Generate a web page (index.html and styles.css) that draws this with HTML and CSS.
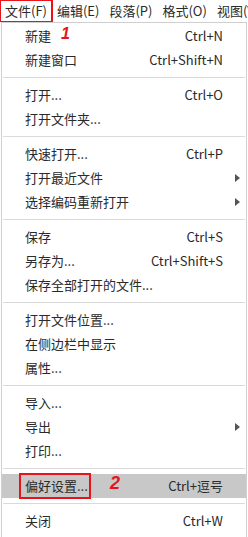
FILE: index.html
```html
<!DOCTYPE html>
<html lang="zh-CN">
<head>
<meta charset="utf-8">
<title>文件菜单</title>
<link rel="stylesheet" href="styles.css">
</head>
<body>
<div class="app">
  <div class="menubar">
    <span class="mb-item mb-active">文件(F)</span>
    <span class="mb-item">编辑(E)</span>
    <span class="mb-item">段落(P)</span>
    <span class="mb-item">格式(O)</span>
    <span class="mb-item">视图(V)</span>
  </div>
  <div class="menu">
    <div class="row"><span class="label">新建</span><span class="key">Ctrl+N</span><span class="sub"></span></div>
    <div class="row"><span class="label">新建窗口</span><span class="key">Ctrl+Shift+N</span><span class="sub"></span></div>
    <div class="sep"></div>
    <div class="row"><span class="label">打开...</span><span class="key">Ctrl+O</span><span class="sub"></span></div>
    <div class="row"><span class="label">打开文件夹...</span><span class="key"></span><span class="sub"></span></div>
    <div class="sep"></div>
    <div class="row"><span class="label">快速打开...</span><span class="key">Ctrl+P</span><span class="sub"></span></div>
    <div class="row"><span class="label">打开最近文件</span><span class="key"></span><span class="sub"><i class="arrow"></i></span></div>
    <div class="row"><span class="label">选择编码重新打开</span><span class="key"></span><span class="sub"><i class="arrow"></i></span></div>
    <div class="sep"></div>
    <div class="row"><span class="label">保存</span><span class="key">Ctrl+S</span><span class="sub"></span></div>
    <div class="row"><span class="label">另存为...</span><span class="key">Ctrl+Shift+S</span><span class="sub"></span></div>
    <div class="row"><span class="label">保存全部打开的文件...</span><span class="key"></span><span class="sub"></span></div>
    <div class="sep"></div>
    <div class="row"><span class="label">打开文件位置...</span><span class="key"></span><span class="sub"></span></div>
    <div class="row"><span class="label">在侧边栏中显示</span><span class="key"></span><span class="sub"></span></div>
    <div class="row"><span class="label">属性...</span><span class="key"></span><span class="sub"></span></div>
    <div class="sep"></div>
    <div class="row"><span class="label">导入...</span><span class="key"></span><span class="sub"></span></div>
    <div class="row"><span class="label">导出</span><span class="key"></span><span class="sub"><i class="arrow"></i></span></div>
    <div class="row"><span class="label">打印...</span><span class="key"></span><span class="sub"></span></div>
    <div class="sep"></div>
    <div class="row row-hover"><span class="label"><span class="boxed">偏好设置...</span></span><span class="key">Ctrl+逗号</span><span class="sub"></span></div>
    <div class="sep"></div>
    <div class="row"><span class="label">关闭</span><span class="key">Ctrl+W</span><span class="sub"></span></div>
  </div>
  <span class="note note-1">1</span>
  <span class="note note-2">2</span>
</div>
</body>
</html>
```
FILE: styles.css
```css
* { box-sizing: border-box; }
html, body { margin: 0; padding: 0; background: #ffffff; }
body {
  font-family: "Noto Sans CJK SC", "Noto Sans", sans-serif;
  font-size: 13px;
  color: #2a2a2a;
}
.app {
  position: relative;
  width: 248px;
  height: 537px;
  overflow: hidden;
}
.menubar {
  display: flex;
  height: 22px;
  line-height: 22px;
  white-space: nowrap;
  overflow: hidden;
}
.mb-item {
  padding: 0 5px;
  flex: none;
}
.mb-active {
  outline: 2px solid #e8141b;
  outline-offset: -1px;
}
.menu {
  margin-left: 1px;
  width: 246px;
  height: 515px;
  border: 1px solid #cfcfcf;
  border-bottom: none;
  padding-top: 1px;
  background: #ffffff;
}
.row {
  display: grid;
  grid-template-columns: 1fr auto 23px;
  height: 24px;
  line-height: 24px;
  padding-left: 23px;
  white-space: nowrap;
}
.row-hover { background: #c8c8c8; }
.key { text-align: right; }
.arrow {
  display: block;
  width: 0;
  height: 0;
  margin: 8px 0 0 12px;
  border-top: 4px solid transparent;
  border-bottom: 4px solid transparent;
  border-left: 5px solid #555555;
}
.sep {
  height: 1px;
  margin: 5px 1px;
  background: #dadada;
}
.boxed {
  display: inline-block;
  line-height: 22px;
  margin-left: -6px;
  margin-top: -1px;
  padding: 0 1px 0 4px;
  border: 2px solid #e8141b;
  vertical-align: top;
}
.note {
  position: absolute;
  font-family: "Liberation Sans", sans-serif;
  font-weight: bold;
  font-style: italic;
  color: #e8141b;
  line-height: 1;
}
.note-1 { left: 61px; top: 26px; font-size: 16px; }
.note-2 { left: 110px; top: 474px; font-size: 18px; }
```
